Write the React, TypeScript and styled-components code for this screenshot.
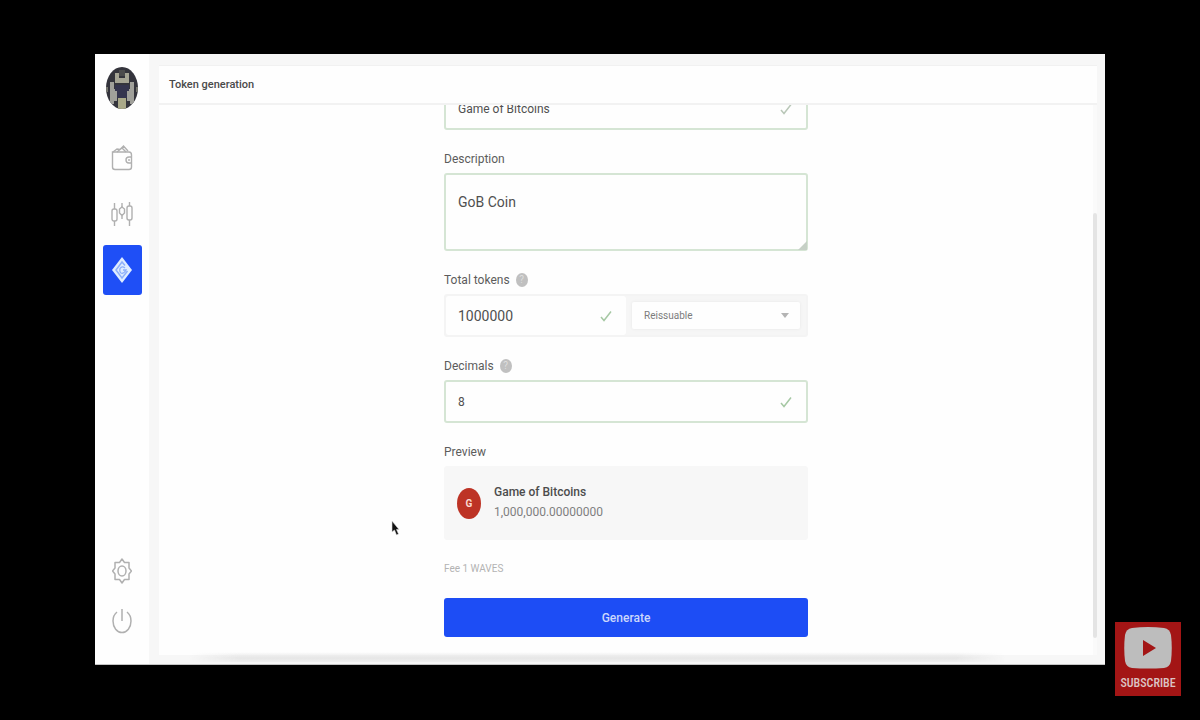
import React from "react";
import styled, { createGlobalStyle } from "styled-components";

const GlobalStyle = createGlobalStyle`
  *, *::before, *::after { box-sizing: border-box; }
  body { margin: 0; background: #000; font-family: Roboto, "Liberation Sans", sans-serif; }
  button, input, select, textarea { font: inherit; }
`;

const Stage = styled.div`
  position: relative;
  display: flex;
  height: 100vh;
  padding: 54px 95px 55px;
  background: #000;
`;

const AppWindow = styled.div`
  flex: 1;
  display: flex;
  min-width: 0;
  background: #fefefe;
  border-bottom: 1px solid #c4c4c4;
`;

const Sidebar = styled.nav`
  width: 54px;
  display: flex;
  flex-direction: column;
  align-items: center;
  padding: 13px 0 18px;
  background: #fefefe;
`;

const NavGroup = styled.div<{ $gap: number }>`
  display: flex;
  flex-direction: column;
  gap: ${(p) => p.$gap}px;
`;

const NavButton = styled.button<{ $active?: boolean }>`
  display: flex;
  align-items: center;
  justify-content: center;
  width: 39px;
  height: 50px;
  margin: 0;
  padding: 0;
  border: 0;
  border-radius: 3px;
  background: ${(p) => (p.$active ? "#1f4ff6" : "transparent")};
`;

const Avatar = styled.div`
  display: flex;
  margin-bottom: 24px;
`;

const NavSpacer = styled.div`
  flex: 1;
`;

const Main = styled.main`
  position: relative;
  flex: 1;
  display: flex;
  min-width: 0;
  padding: 11px 8px 9px 10px;
  background: #f7f7f7;
`;

const BottomShade = styled.div`
  position: absolute;
  left: 40px;
  right: 100px;
  bottom: 2px;
  height: 10px;
  background: linear-gradient(to bottom, transparent, #e6e6e6 60%, #efefef);
  mask-image: linear-gradient(to right, transparent, #000 6%, #000 94%, transparent);
`;

const Panel = styled.section`
  flex: 1;
  display: flex;
  flex-direction: column;
  min-width: 0;
  border-top: 1px solid #f1f1f1;
  background: #fefefe;
`;

const PanelHeader = styled.header`
  height: 39px;
  flex: none;
  display: flex;
  align-items: center;
  padding: 0 10px;
  border-bottom: 2px solid #f2f2f2;
`;

const Title = styled.h1`
  margin: 0;
  font-size: 11px;
  font-weight: 500;
  line-height: 16px;
  color: #4a4a4a;
`;

const PanelBody = styled.div`
  flex: 1;
  display: flex;
  min-height: 0;
  overflow: hidden;
`;

const Scrolled = styled.div`
  flex: 1;
  display: flex;
  flex-direction: column;
  justify-content: flex-end;
  align-items: center;
  min-width: 0;
  padding-bottom: 18px;
`;

const ScrollTrack = styled.div`
  width: 4px;
  padding: 108px 0 17px;
  background: #fafafa;
`;

const ScrollThumb = styled.div`
  height: 100%;
  border-radius: 2px;
  background: #e4e4e4;
`;

const Form = styled.form`
  width: 364px;
  max-width: 100%;
  flex: none;
  display: flex;
  flex-direction: column;
  gap: 21px;
`;

const Field = styled.div`
  display: flex;
  flex-direction: column;
  gap: 6px;
`;

const Label = styled.label`
  display: flex;
  align-items: center;
  gap: 6px;
  font-size: 12px;
  line-height: 16px;
  color: #5c5c5c;
`;

const HelpMark = styled.span`
  width: 12px;
  height: 14px;
  border-radius: 50%;
  background: #c0c0c0;
  color: #dedede;
  font-size: 10px;
  line-height: 14px;
  text-align: center;
`;

const InputBox = styled.div`
  display: flex;
  align-items: center;
  min-width: 0;
  height: 43px;
  padding: 0 14px 0 12px;
  border: 2px solid #d5e5d4;
  border-radius: 3px;
  background: #fefefe;
`;

const TextInput = styled.input<{ $large?: boolean }>`
  flex: 1;
  min-width: 0;
  padding: 0;
  border: 0;
  outline: 0;
  background: transparent;
  font-size: ${(p) => (p.$large ? 14 : 12)}px;
  line-height: 18px;
  color: #505050;
`;

const TextAreaWrap = styled.div`
  position: relative;
`;

const TextArea = styled.textarea`
  display: block;
  width: 100%;
  height: 78px;
  padding: 18px 12px;
  border: 2px solid #d5e5d4;
  border-radius: 3px;
  outline: 0;
  resize: none;
  background: #fefefe;
  font-size: 14px;
  line-height: 18px;
  color: #505050;
`;

const Grip = styled.span`
  position: absolute;
  right: 1px;
  bottom: 1px;
  border-style: solid;
  border-width: 0 0 9px 9px;
  border-color: transparent transparent #c6d0c6 transparent;
`;

const AmountRow = styled.div`
  display: flex;
  height: 43px;
  border: 2px solid #f4f4f4;
  border-radius: 3px;
  background: #f6f6f6;
`;

const AmountInput = styled(InputBox)`
  width: 50%;
  height: 100%;
  border: 0;
`;

const SelectWrap = styled.div`
  width: 50%;
  position: relative;
  display: flex;
  padding: 6px;
`;

const Select = styled.select`
  flex: 1;
  min-width: 0;
  appearance: none;
  padding: 0 12px;
  border: 0;
  border-radius: 2px;
  background: #fefefe;
  box-shadow: 0 0 3px #e6e6e6;
  font-size: 10px;
  color: #7c7c7c;
`;

const Caret = styled.span`
  position: absolute;
  right: 17px;
  top: 17px;
  border-style: solid;
  border-width: 5px 4px 0;
  border-color: #b4b4b4 transparent transparent;
  pointer-events: none;
`;

const PreviewCard = styled.div`
  display: flex;
  align-items: center;
  gap: 13px;
  height: 74px;
  padding: 0 13px;
  border-radius: 3px;
  background: #f7f7f7;
`;

const TokenBadge = styled.span`
  width: 24px;
  height: 31px;
  border-radius: 50%;
  background: #bd3325;
  color: #f9d9d2;
  font-size: 10px;
  font-weight: 700;
  line-height: 31px;
  text-align: center;
`;

const TokenText = styled.div`
  display: flex;
  flex-direction: column;
  font-size: 12px;
  line-height: 20px;
  padding-bottom: 2px;
`;

const TokenName = styled.span`
  font-weight: 500;
  color: #4c4c4c;
`;

const TokenAmount = styled.span`
  color: #7f7f7f;
`;

const Fee = styled.div`
  font-size: 10px;
  line-height: 16px;
  color: #b3b3b3;
`;

const Submit = styled.button`
  height: 39px;
  padding: 0;
  border: 0;
  border-radius: 3px;
  background: #1d4df5;
  font-size: 12px;
  font-weight: 500;
  color: #cbd7fc;
`;

const SubscribeButton = styled.button`
  position: absolute;
  right: 19px;
  bottom: 24px;
  width: 66px;
  height: 74px;
  display: flex;
  flex-direction: column;
  align-items: center;
  gap: 3px;
  padding: 5px 0 0;
  border: 0;
  background: #a31515;
  color: #dcc4c4;
  font-family: "Roboto Condensed", "Liberation Sans Narrow", Roboto, sans-serif;
  font-size: 12px;
  font-weight: 500;
  line-height: 22px;
`;

const Pointer = styled.svg`
  position: absolute;
  left: 391px;
  top: 520px;
  pointer-events: none;
`;

const Check = ({ green = false }: { green?: boolean }) => (
  <svg width="12" height="12" viewBox="0 0 12 12" fill="none" stroke={green ? "#a6c8a4" : "#b9c7b8"} strokeWidth="1.5" aria-hidden="true">
    <path d="M1 7l3 3.5L11 1.5" />
  </svg>
);

const AvatarArt = () => (
  <svg width="32" height="42" viewBox="0 0 32 42" role="img" aria-label="Account">
    <defs>
      <clipPath id="oval"><ellipse cx="16" cy="21" rx="16" ry="21" /></clipPath>
    </defs>
    <g clipPath="url(#oval)">
      <rect width="32" height="42" fill="#34343c" />
      <path d="M9 6h4v5h6V6h4v10H9z" fill="#a5a494" />
      <path d="M13 3h6v6h-6z" fill="#4b4b4c" />
      <path d="M4 15h4v7h3v12H8v3H4z M28 15h-4v7h-3v12h3v3h4z" fill="#a0a09a" />
      <path d="M0 20h2v5H0z M30 20h2v5h-2z" fill="#77776f" />
      <path d="M9 18h14v6h-2v7H11v-7H9z" fill="#34344e" />
      <path d="M12 31h8v11h-8z" fill="#a9a888" />
    </g>
  </svg>
);

const WalletIcon = () => (
  <svg width="22" height="28" viewBox="0 0 22 28" fill="none" stroke="#b0b0b0" strokeWidth="1.4">
    <path d="M3 8H1.5v15q0 2.5 2.5 2.5h14q2.5 0 2.5-2.5V11q0-3-2.5-3H3" />
    <path d="M2 8l4-3 3 .5L12.500 2l4.500 5M6 8l5-4 4 4" />
    <path d="M20.500 13H18q-3 0-3 3t3 3h2.500M18 15v2" />
  </svg>
);

const CandlesIcon = () => (
  <svg width="22" height="26" viewBox="0 0 22 26" fill="none" stroke="#b0b0b0" strokeWidth="1.4">
    <path d="M3.500 2v6M3.500 20v5M11 2v4M11 14.500V18M18.500 1v4M18.500 19v6" />
    <rect x="1" y="8" width="5" height="12" rx="2" />
    <path d="M11 6l2.500 2v4L11 14.500 8.500 12V8z" />
    <rect x="16" y="5" width="5" height="14" rx="2" />
  </svg>
);

const TokenIcon = () => (
  <svg width="20" height="26" viewBox="0 0 20 26" fill="none">
    <path d="M10 0l10 13-10 13L0 13z" fill="#dfedff" />
    <path d="M13 8.500L10 5 4 13l6 8 5.500-7" stroke="#8eb0fa" strokeWidth="1.5" />
    <path d="M13 11q-3-2.500-5 .500-1 4 2 5 2 0 4-3.500h-3" stroke="#8eb0fa" strokeWidth="1.3" />
  </svg>
);

const GearIcon = () => (
  <svg width="20" height="26" viewBox="0 0 20 26" fill="none" stroke="#b0b0b0" strokeWidth="1.5" strokeLinejoin="round">
    <path d="M10 1l2.500 3.500L17 4.500v5.500L19.500 13 17 16v5.500l-4.500 0L10 25l-2.500-3.500H3V16L.500 13 3 10V4.500h4.500z" />
    <ellipse cx="10" cy="13" rx="4" ry="5" />
  </svg>
);

const PowerIcon = () => (
  <svg width="20" height="26" viewBox="0 0 20 26" fill="none" stroke="#b0b0b0" strokeWidth="1.5">
    <path d="M10 1v12M5 4C2.500 6 1 9.500 1 13c0 6.500 4 11.500 9 11.500S19 19.500 19 13c0-3.500-1.500-7-4-9" />
  </svg>
);

export default function App() {
  return (
    <>
      <GlobalStyle />
      <Stage>
        <AppWindow>
          <Sidebar aria-label="Main">
            <Avatar><AvatarArt /></Avatar>
            <NavGroup $gap={6}>
              <NavButton type="button" aria-label="Wallet"><WalletIcon /></NavButton>
              <NavButton type="button" aria-label="Exchange"><CandlesIcon /></NavButton>
              <NavButton type="button" aria-label="Tokens" $active><TokenIcon /></NavButton>
            </NavGroup>
            <NavSpacer />
            <NavGroup $gap={0}>
              <NavButton type="button" aria-label="Settings"><GearIcon /></NavButton>
              <NavButton type="button" aria-label="Log out"><PowerIcon /></NavButton>
            </NavGroup>
          </Sidebar>
          <Main>
            <Panel>
              <PanelHeader><Title>Token generation</Title></PanelHeader>
              <PanelBody>
                <Scrolled>
                  <Form onSubmit={(e) => e.preventDefault()}>
                    <InputBox>
                      <TextInput aria-label="Name" defaultValue="Game of Bitcoins" />
                      <Check />
                    </InputBox>
                    <Field>
                      <Label htmlFor="description">Description</Label>
                      <TextAreaWrap>
                        <TextArea id="description" defaultValue="GoB Coin" />
                        <Grip />
                      </TextAreaWrap>
                    </Field>
                    <Field>
                      <Label htmlFor="total">Total tokens <HelpMark>?</HelpMark></Label>
                      <AmountRow>
                        <AmountInput>
                          <TextInput id="total" $large defaultValue="1000000" />
                          <Check green />
                        </AmountInput>
                        <SelectWrap>
                          <Select aria-label="Token type" defaultValue="reissuable">
                            <option value="reissuable">Reissuable</option>
                          </Select>
                          <Caret />
                        </SelectWrap>
                      </AmountRow>
                    </Field>
                    <Field>
                      <Label htmlFor="decimals">Decimals <HelpMark>?</HelpMark></Label>
                      <InputBox>
                        <TextInput id="decimals" defaultValue="8" />
                        <Check green />
                      </InputBox>
                    </Field>
                    <Field>
                      <Label as="div">Preview</Label>
                      <PreviewCard>
                        <TokenBadge>G</TokenBadge>
                        <TokenText>
                          <TokenName>Game of Bitcoins</TokenName>
                          <TokenAmount>1,000,000.00000000</TokenAmount>
                        </TokenText>
                      </PreviewCard>
                    </Field>
                    <Fee>Fee 1 WAVES</Fee>
                    <Submit type="submit">Generate</Submit>
                  </Form>
                </Scrolled>
                <ScrollTrack><ScrollThumb /></ScrollTrack>
              </PanelBody>
            </Panel>
            <BottomShade />
          </Main>
        </AppWindow>
        <Pointer width="9" height="16" viewBox="0 0 9 16" aria-hidden="true">
          <path d="M1 1v11l2.500-2 2 5 2-1-2-4.500H8z" fill="#111" stroke="#ddd" strokeWidth=".6" />
        </Pointer>
        <SubscribeButton type="button">
          <svg width="48" height="42" viewBox="0 0 48 42" aria-hidden="true">
            <path d="M8 1Q24-1 40 1q6 1 7 7 1.500 13 0 26-1 6-7 7-16 1-32 0-6-1-7-7-1.500-13 0-26 1-6 7-7z" fill="#bdbdbd" />
            <path d="M19 13l13 8-13 8z" fill="#a31515" />
          </svg>
          SUBSCRIBE
        </SubscribeButton>
      </Stage>
    </>
  );
}
